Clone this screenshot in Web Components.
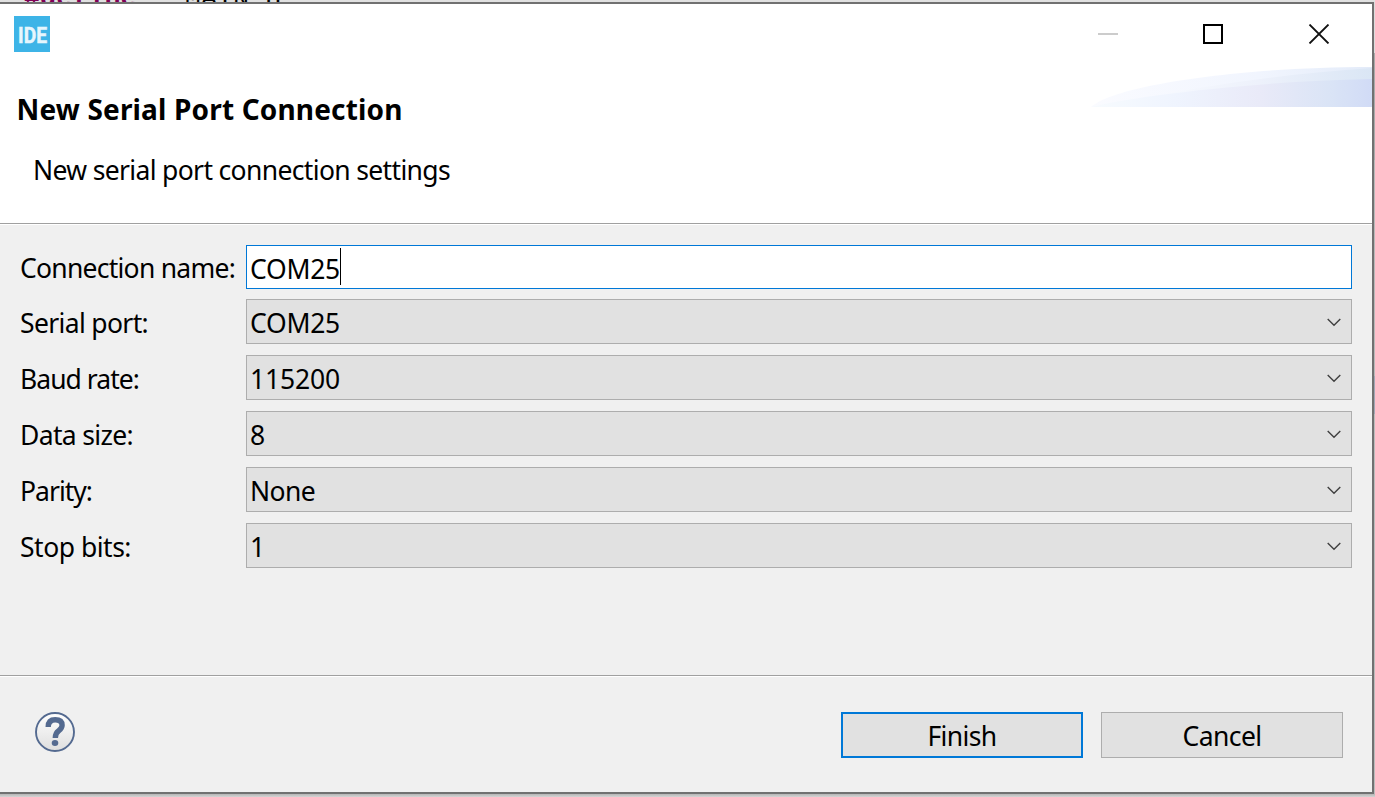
<!DOCTYPE html>
<html lang="en">
<head>
<meta charset="utf-8">
<title>New Serial Port Connection</title>
<style>
html,body{margin:0;height:100%;overflow:hidden;background:#d4d4d4}
body{font-family:"Noto Sans","Open Sans",sans-serif;font-size:26.5px;color:#000}
</style>
</head>
<body>
<app-desktop>
  <wizard-dialog>
    <title-bar slot="bar"></title-bar>
    <wizard-header slot="header">
      <fit-text slot="title" w="386">New Serial Port Connection</fit-text>
      <fit-text slot="message" w="417">New serial port connection settings</fit-text>
    </wizard-header>
    <form-row edit><fit-text w="215">Connection name:</fit-text><fit-text slot="value" w="90">COM25</fit-text></form-row>
    <form-row><fit-text w="128">Serial port:</fit-text><fit-text slot="value" w="90">COM25</fit-text></form-row>
    <form-row><fit-text w="119">Baud rate:</fit-text><fit-text slot="value" w="90">115200</fit-text></form-row>
    <form-row><fit-text w="113">Data size:</fit-text><fit-text slot="value" w="15">8</fit-text></form-row>
    <form-row><fit-text w="72">Parity:</fit-text><fit-text slot="value" w="65">None</fit-text></form-row>
    <form-row><fit-text w="111">Stop bits:</fit-text><fit-text slot="value" w="15">1</fit-text></form-row>
    <help-icon slot="footer"></help-icon>
    <push-button slot="footer" primary><fit-text w="69">Finish</fit-text></push-button>
    <push-button slot="footer"><fit-text w="79">Cancel</fit-text></push-button>
  </wizard-dialog>
</app-desktop>
<script>
const define = (name, html, setup) => customElements.define(name, class extends HTMLElement {
  constructor() { super(); this.attachShadow({mode: 'open'}).innerHTML = html; }
  connectedCallback() { if (setup) setup(this); }
});

define('app-desktop', `<style>
:host{display:grid;grid-template-rows:2px 792px 3px;grid-template-columns:1374px 1px;width:1375px;height:797px}
.code{grid-column:1/3;overflow:hidden;background:#e1e1e1;font:26.8px/30px "Liberation Mono",monospace;white-space:pre;padding-left:24px}
.code div{margin-top:-16px}
.code b{color:#7f0055}
.side{background:linear-gradient(#dcdcdc 0 51px,#aaa 51px 158px,#b9b9b9 158px 374px,#a2a7b5 374px 412px,#bcbcbc 412px)}
.below{grid-column:1/3;background:linear-gradient(#b5b5b5,#d4d4d4)}
</style><div class="code"><div><b>#define</b> __MAIN_H</div></div><slot></slot><div class="side"></div><div class="below"></div>`);

define('wizard-dialog', `<style>
:host{display:grid;grid-template-rows:60px 159px 2px 450px 2px 115px;box-sizing:border-box;height:792px;border:2px solid #717171;border-left:0;background:#f0f0f0}
.line{background:linear-gradient(#a0a0a0 50%,#fff 50%)}
.form{display:flex;flex-direction:column;gap:11px;padding:20px 20px 0}
.foot{display:flex;gap:18px;padding:35px 29px 0 35px}
</style><slot name="bar"></slot><slot name="header"></slot><div class="line"></div><div class="form"><slot></slot></div><div class="line"></div><div class="foot"><slot name="footer"></slot></div>`);

define('title-bar', `<style>
:host{display:flex;justify-content:space-between;background:#fff;padding:12px 42px 0 14px}
svg{display:block}.controls{display:flex;padding-top:8px}
.max{margin:0 85px 0 83px}
</style>
<svg width="36" height="36"><rect width="36" height="36" fill="#3db4e7"/><text x="4" y="26.5" textLength="29" lengthAdjust="spacingAndGlyphs" font-family="Roboto,sans-serif" font-weight="700" font-size="22.5" fill="#e6f6fd" stroke="#e6f6fd" stroke-width=".5">IDE</text></svg>
<div class="controls">
<svg width="22" height="20"><path d="M0 10h20" stroke="#ccc" stroke-width="2"/></svg>
<svg class="max" width="20" height="20"><rect x="1" y="1" width="18" height="18" fill="none" stroke="#000" stroke-width="2"/></svg>
<svg width="22" height="20"><path d="M1.5.5l19 19M20.5.5l-19 19" stroke="#111" stroke-width="1.8"/></svg>
</div>`);

define('wizard-header', `<style>
:host{display:grid;grid-template-columns:1fr 281px;background:#fff}
.text{padding:27px 0 0 16.6px}
.title{font-weight:700;font-size:28px;line-height:36px;height:36px}
.msg{padding:25px 0 0 16.4px;line-height:36px}
svg{display:block;margin-top:3px}
</style>
<div class="text"><div class="title"><slot name="title"></slot></div><div class="msg"><slot name="message"></slot></div></div>
<svg width="281" height="40" viewBox="0 0 281 40"><defs>
<linearGradient id="a"><stop stop-color="#fafbff"/><stop offset=".6" stop-color="#f1f5fe"/><stop offset="1" stop-color="#e3ebf9"/></linearGradient>
<linearGradient id="b"><stop stop-color="#fafcff"/><stop offset=".3" stop-color="#f5f8fe"/><stop offset=".6" stop-color="#edf1fb"/><stop offset="1" stop-color="#dae6f5"/></linearGradient>
<linearGradient id="c"><stop stop-color="#f7fbfe"/><stop offset=".3" stop-color="#eff4fe"/><stop offset=".6" stop-color="#e9eaf8"/><stop offset=".85" stop-color="#dae4f6"/><stop offset="1" stop-color="#d1dbf6"/></linearGradient></defs>
<path d="M0 40C22 19 145 0 281 0V40Z" fill="url(#a)"/><path d="M1 40C65 28 170 8 281 1V40Z" fill="url(#b)"/><path d="M1 40C35 30 165 14 281 12V40Z" fill="url(#c)"/></svg>`);

define('form-row', `<style>
:host{display:grid;grid-template-columns:226px 1106px;height:45px}
:host([edit]){height:43px}
.label{line-height:48px}
:host([edit]) .label{line-height:46px}
.box{display:flex;justify-content:space-between;box-sizing:border-box;height:45px;border:1px solid #adadad;background:#e1e1e1;line-height:46px;padding:0 10px 0 3px}
:host([edit]) .box{height:44px;border-color:#0078d7;background:#fff}
:host([edit]) svg{display:none}
.value{display:flex}
.caret{display:none;width:1px;height:37px;margin:2px 0 0;background:#000}
:host([edit]) .caret{display:block}
svg{margin-top:18px}
</style><div class="label"><slot></slot></div><div class="box"><div class="value"><slot name="value"></slot><i class="caret"></i></div><svg width="14" height="9"><path d="M.7 1l6.3 6.3L13.3 1" fill="none" stroke="#404040" stroke-width="1.4"/></svg></div>`);

define('help-icon', `<style>:host{display:block;width:40px;height:40px;margin-right:auto}svg{display:block}</style>
<svg width="40" height="40"><defs><linearGradient id="g" x2="0" y2="1"><stop stop-color="#fff"/><stop offset="1" stop-color="#dedede"/></linearGradient></defs><circle cx="20" cy="20" r="19" fill="url(#g)" stroke="#546a90" stroke-width="1.9"/><path d="M13.2 15Q13.2 7.8 20.2 7.8Q27.1 7.8 27.1 13.3Q27.1 16.3 23.7 18.7Q20.3 21 20.3 26" fill="none" stroke="#546a90" stroke-width="5.4"/><ellipse cx="20" cy="31" rx="3.3" ry="3" fill="#546a90"/></svg>`);

define('push-button', `<style>
:host{display:flex;justify-content:center;box-sizing:border-box;width:242px;height:46px;border:1px solid #adadad;background:#e1e1e1;line-height:46px}
:host([primary]){border:2px solid #0078d7;line-height:44px}
</style><slot></slot>`);

// Spreads a run of text over the advance width given in its "w" attribute.
define('fit-text', `<style>:host{display:inline-block;white-space:pre}span{display:inline-block}</style><span><slot></slot></span>`, el => {
  const span = el.shadowRoot.querySelector('span');
  const w = +el.getAttribute('w');
  span.style.letterSpacing = (w - span.getBoundingClientRect().width) / el.textContent.length + 'px';
  el.style.width = w + 'px';
});
</script>
</body>
</html>
